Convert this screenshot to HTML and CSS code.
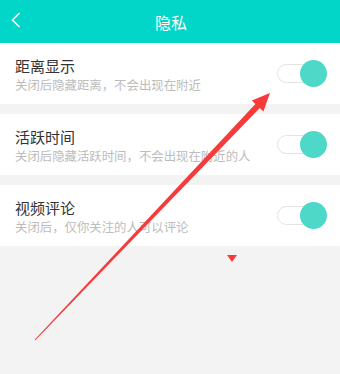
FILE: index.html
```html
<!DOCTYPE html>
<html lang="zh">
<head>
<meta charset="utf-8">
<link rel="stylesheet" href="styles.css">
</head>
<body>
<div class="page">
  <header class="topbar">
    <svg class="back" width="10" height="16" viewBox="0 0 10 16"><polyline points="8.5,1 1.5,8 8.5,15" fill="none" stroke="#fff" stroke-width="1.6"/></svg>
    <div class="title">隐私</div>
  </header>
  <div class="list">
    <div class="row">
      <div class="texts">
        <div class="name">距离显示</div>
        <div class="desc">关闭后隐藏距离，不会出现在附近</div>
      </div>
      <div class="toggle"><div class="track"></div><div class="knob"></div></div>
    </div>
    <div class="row">
      <div class="texts">
        <div class="name">活跃时间</div>
        <div class="desc">关闭后隐藏活跃时间，不会出现在附近的人</div>
      </div>
      <div class="toggle"><div class="track"></div><div class="knob"></div></div>
    </div>
    <div class="row">
      <div class="texts">
        <div class="name">视频评论</div>
        <div class="desc">关闭后，仅你关注的人可以评论</div>
      </div>
      <div class="toggle"><div class="track"></div><div class="knob"></div></div>
    </div>
  </div>
  <svg class="annot" width="340" height="374" viewBox="0 0 340 374">
    <polygon points="34.6,339.7 255.4,103.9 251.8,100.5 270,93 263.4,111.5 259.8,108.1 35.4,340.3" fill="#f73b3b"/>
    <polygon points="227,255 237,255 232,262" fill="#f73b3b"/>
  </svg>
</div>
</body>
</html>
```
FILE: styles.css
```css
* { box-sizing: border-box; margin: 0; padding: 0; }
html, body { width: 340px; height: 374px; overflow: hidden; }
body { background: #f3f3f3; font-family: "Noto Sans CJK SC", "Noto Sans", sans-serif; }
.page { position: relative; width: 340px; height: 374px; }
.topbar {
  height: 43px;
  background: #02d6c8;
  display: flex;
  align-items: center;
  justify-content: center;
  position: relative;
}
.back { position: absolute; left: 11px; top: 12px; }
.title { color: #fff; font-size: 16px; line-height: 20px; margin-left: 2px; }
.list { display: flex; flex-direction: column; gap: 10px; }
.row {
  height: 61px;
  background: #fff;
  display: flex;
  align-items: center;
  justify-content: space-between;
  padding: 0 13px 0 15px;
}
.texts { display: flex; flex-direction: column; gap: 3px; padding-top: 2px; }
.name { font-size: 15px; line-height: 18px; color: #333; }
.desc { font-size: 12.4px; line-height: 15px; color: #bcbcbc; }
.toggle { position: relative; width: 50px; height: 27px; display: flex; align-items: center; }
.track { width: 45px; height: 19px; border: 1px solid #e3e3e3; border-radius: 10px; background: #fff; }
.knob { position: absolute; right: 0; top: 0; width: 27px; height: 27px; border-radius: 50%; background: #4dd8c8; }
.annot { position: absolute; left: 0; top: 0; pointer-events: none; }
```
